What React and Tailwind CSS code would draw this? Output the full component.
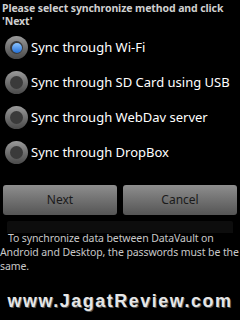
import React from "react";

const options = [
  "Sync through Wi-Fi",
  "Sync through SD Card using USB",
  "Sync through WebDav server",
  "Sync through DropBox",
];

function Radio({ checked }) {
  return (
    <div className="w-[23px] h-[23px] rounded-full bg-gradient-to-b from-[#9a9a9a] to-[#4a4a4a] flex items-center justify-center shrink-0">
      <div className="w-[13px] h-[13px] rounded-full bg-[#3a3a3a] flex items-center justify-center">
        {checked && (
          <div className="w-[10px] h-[10px] rounded-full bg-gradient-to-b from-[#8cc4ff] to-[#1f6fd6]" />
        )}
      </div>
    </div>
  );
}

export default function App() {
  return (
    <div
      className="w-[240px] h-[320px] bg-black overflow-hidden flex flex-col"
      style={{ fontFamily: '"Noto Sans", "Open Sans", sans-serif' }}
    >
      <div className="px-[2px] pt-[2px] text-[10.5px] leading-[13px] font-bold text-[#cfcfcf] whitespace-nowrap tracking-[-0.1px]">
        Please select synchronize method and click
        <br />
        'Next'
      </div>
      <div className="flex flex-col mt-[2px]">
        {options.map((o, i) => (
          <div key={o} className="h-[35px] flex items-center gap-[3px] pl-[5px]">
            <Radio checked={i === 0} />
            <span className="text-[13px] text-white">{o}</span>
          </div>
        ))}
      </div>
      <div className="flex gap-[6px] px-[3px] mt-[15px]">
        <button className="flex-1 h-[30px] rounded-[3px] bg-gradient-to-b from-[#8e8e8e] to-[#555] text-[12px] text-[#1a1a1a]">
          Next
        </button>
        <button className="flex-1 h-[30px] rounded-[3px] bg-gradient-to-b from-[#8e8e8e] to-[#555] text-[12px] text-[#1a1a1a]">
          Cancel
        </button>
      </div>
      <div className="mx-[7px] mt-[6px] h-[12px] bg-[#0d0d0d] rounded-t-[2px]" />
      <div className="text-[10.5px] leading-[14px] text-[#c8c8c8] -mt-[2px] whitespace-nowrap tracking-[-0.1px]">
        &nbsp;&nbsp;&nbsp;To synchronize data between DataVault on
        <br />
        Android and Desktop, the passwords must be the
        <br />
        same.
      </div>
      <div
        className="mt-auto mb-[5px] text-center text-[18px] font-black text-[#e6e6e6] tracking-[1.5px]"
        style={{ fontFamily: '"Liberation Sans", Arial, sans-serif', textShadow: "1px 1px 0 #555" }}
      >
        www.JagatReview.com
      </div>
    </div>
  );
}
